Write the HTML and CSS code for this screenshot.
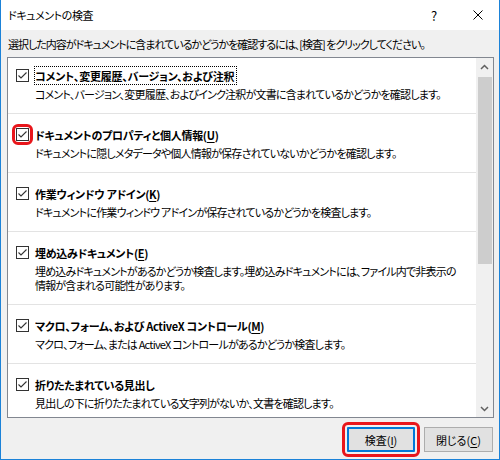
FILE: index.html
```html
<!DOCTYPE html>
<html lang="ja">
<head>
<meta charset="utf-8">
<title>ドキュメントの検査</title>
<link rel="stylesheet" href="styles.css">
</head>
<body>
<div class="window">
  <div class="titlebar">
    <span class="wintitle">ドキュメントの検査</span>
    <span class="help">?</span>
    <span class="close">
      <svg width="10" height="10" viewBox="0 0 10 10"><path d="M0.5 0.5 L9.5 9.5 M9.5 0.5 L0.5 9.5" stroke="#000" stroke-width="1" fill="none"/></svg>
    </span>
  </div>
  <div class="body">
    <div class="intro">選択した内容がドキュメントに含まれているかどうかを確認するには、[検査] をクリックしてください。</div>
    <div class="listbox">
      <div class="items">
        <div class="item first">
          <div class="head"><span class="cb"><svg width="13" height="13" viewBox="0 0 13 13"><rect x="0.5" y="0.5" width="12" height="12" fill="#fff" stroke="#333"/><path d="M2.5 6.5 L5 9 L10.5 3.5" stroke="#333" stroke-width="1.1" fill="none"/></svg></span><span class="title focus">コメント、変更履歴、バージョン、および注釈</span></div>
          <div class="desc">コメント、バージョン、変更履歴、およびインク注釈が文書に含まれているかどうかを確認します。</div>
        </div>
        <div class="item">
          <div class="head"><span class="cb marked"><svg width="13" height="13" viewBox="0 0 13 13"><rect x="0.5" y="0.5" width="12" height="12" fill="#fff" stroke="#333"/><path d="M2.5 6.5 L5 9 L10.5 3.5" stroke="#333" stroke-width="1.1" fill="none"/></svg></span><span class="title">ドキュメントのプロパティと個人情報(<u>U</u>)</span></div>
          <div class="desc">ドキュメントに隠しメタデータや個人情報が保存されていないかどうかを確認します。</div>
        </div>
        <div class="item">
          <div class="head"><span class="cb"><svg width="13" height="13" viewBox="0 0 13 13"><rect x="0.5" y="0.5" width="12" height="12" fill="#fff" stroke="#333"/><path d="M2.5 6.5 L5 9 L10.5 3.5" stroke="#333" stroke-width="1.1" fill="none"/></svg></span><span class="title">作業ウィンドウ アドイン(<u>K</u>)</span></div>
          <div class="desc">ドキュメントに作業ウィンドウ アドインが保存されているかどうかを検査します。</div>
        </div>
        <div class="item">
          <div class="head"><span class="cb"><svg width="13" height="13" viewBox="0 0 13 13"><rect x="0.5" y="0.5" width="12" height="12" fill="#fff" stroke="#333"/><path d="M2.5 6.5 L5 9 L10.5 3.5" stroke="#333" stroke-width="1.1" fill="none"/></svg></span><span class="title">埋め込みドキュメント(<u>E</u>)</span></div>
          <div class="desc">埋め込みドキュメントがあるかどうか検査します。埋め込みドキュメントには、ファイル内で非表示の<br>情報が含まれる可能性があります。</div>
        </div>
        <div class="item">
          <div class="head"><span class="cb"><svg width="13" height="13" viewBox="0 0 13 13"><rect x="0.5" y="0.5" width="12" height="12" fill="#fff" stroke="#333"/><path d="M2.5 6.5 L5 9 L10.5 3.5" stroke="#333" stroke-width="1.1" fill="none"/></svg></span><span class="title">マクロ、フォーム、および ActiveX コントロール(<u>M</u>)</span></div>
          <div class="desc">マクロ、フォーム、または ActiveX コントロールがあるかどうか検査します。</div>
        </div>
        <div class="item">
          <div class="head"><span class="cb"><svg width="13" height="13" viewBox="0 0 13 13"><rect x="0.5" y="0.5" width="12" height="12" fill="#fff" stroke="#333"/><path d="M2.5 6.5 L5 9 L10.5 3.5" stroke="#333" stroke-width="1.1" fill="none"/></svg></span><span class="title">折りたたまれている見出し</span></div>
          <div class="desc">見出しの下に折りたたまれている文字列がないか、文書を確認します。</div>
        </div>
      </div>
      <div class="scrollbar">
        <div class="arrow"><svg width="9" height="6" viewBox="0 0 9 6"><path d="M1 5 L4.5 1.5 L8 5" stroke="#606060" stroke-width="1.5" fill="none"/></svg></div>
        <div class="thumb"></div>
        <div class="track"></div>
        <div class="arrow"><svg width="9" height="6" viewBox="0 0 9 6"><path d="M1 1 L4.5 4.5 L8 1" stroke="#606060" stroke-width="1.5" fill="none"/></svg></div>
      </div>
    </div>
    <div class="buttons">
      <button class="btn primary">検査(<u>I</u>)</button>
      <button class="btn">閉じる(<u>C</u>)</button>
    </div>
  </div>
</div>
</body>
</html>
```
FILE: styles.css
```css
html, body {
  margin: 0;
  padding: 0;
}
body {
  width: 500px;
  height: 460px;
  overflow: hidden;
  font-family: "Noto Sans CJK JP", "Noto Sans", sans-serif;
  font-size: 11px;
  color: #000;
  font-feature-settings: "palt";
}
.window {
  width: 500px;
  height: 460px;
  box-sizing: border-box;
  border: 1px solid #1b82d8;
  border-top: none;
  background: #f0f0f0;
  display: flex;
  flex-direction: column;
}
.titlebar {
  height: 30px;
  background: #fff;
  display: flex;
  align-items: center;
  padding-left: 7px;
}
.wintitle {
  flex: 1;
  font-size: 11px;
  line-height: 16px;
  letter-spacing: -0.4px;
}
.help {
  font-size: 13px;
  width: 12px;
  margin-right: 33px;
  text-align: center;
}
.close {
  display: flex;
  width: 10px;
  height: 10px;
  margin-right: 16px;
}
.body {
  flex: 1;
  display: flex;
  flex-direction: column;
  padding: 0 5px 0 6px;
}
.intro {
  padding-top: 6px;
  padding-left: 1px;
  height: 16px;
  line-height: 16px;
  margin-bottom: 5px;
  letter-spacing: -1px;
  white-space: nowrap;
}
.listbox {
  height: 361px;
  box-sizing: border-box;
  border: 1px solid #828790;
  background: #fff;
  display: flex;
  overflow: hidden;
}
.items {
  flex: 1;
  display: flex;
  flex-direction: column;
  overflow: hidden;
}
.item {
  padding: 14px 0 12px 8px;
  border-bottom: 1px solid #e3e3e3;
  flex-shrink: 0;
}
.item.first {
  padding-top: 11px;
}
.head {
  height: 13px;
  display: flex;
  align-items: center;
}
.cb {
  width: 13px;
  height: 13px;
  display: flex;
  flex-shrink: 0;
}
.cb.marked {
  outline: 3px solid #e8161b;
  outline-offset: 1px;
  border-radius: 2px;
}
.title {
  margin-left: 6px;
  font-weight: bold;
  line-height: 16px;
  white-space: nowrap;
  letter-spacing: -0.3px;
}
.title.focus {
  margin-left: 5px;
  border: 1px dotted #000;
  padding: 1px 2px 0 0;
  line-height: 16px;
  letter-spacing: -0.2px;
}
.desc {
  margin-top: 5px;
  padding-left: 19px;
  line-height: 14px;
  white-space: nowrap;
  letter-spacing: -0.8px;
}
u {
  text-decoration: underline;
  text-underline-offset: 2px;
}
.scrollbar {
  width: 17px;
  flex-shrink: 0;
  background: #f0f0f0;
  display: flex;
  flex-direction: column;
  align-items: center;
}
.arrow {
  height: 17px;
  width: 17px;
  display: flex;
  align-items: center;
  justify-content: center;
}
.thumb {
  margin-top: 2px;
  width: 14px;
  height: 187px;
  background: #cdcdcd;
}
.track {
  flex: 1;
}
.buttons {
  display: flex;
  justify-content: flex-end;
  gap: 9px;
  margin-top: 9px;
  padding-right: 1px;
}
.btn {
  height: 25px;
  width: 69px;
  box-sizing: border-box;
  border: 1px solid #adadad;
  background: #e1e1e1;
  font-family: "Noto Sans CJK JP", "Noto Sans", sans-serif;
  font-size: 11px;
  color: #000;
  padding: 0;
  font-feature-settings: "palt";
}
.btn.primary {
  width: 68px;
  border: 2px solid #0078d7;
  outline: 3px solid #e8161b;
  outline-offset: 2px;
  border-radius: 1px;
}
```
